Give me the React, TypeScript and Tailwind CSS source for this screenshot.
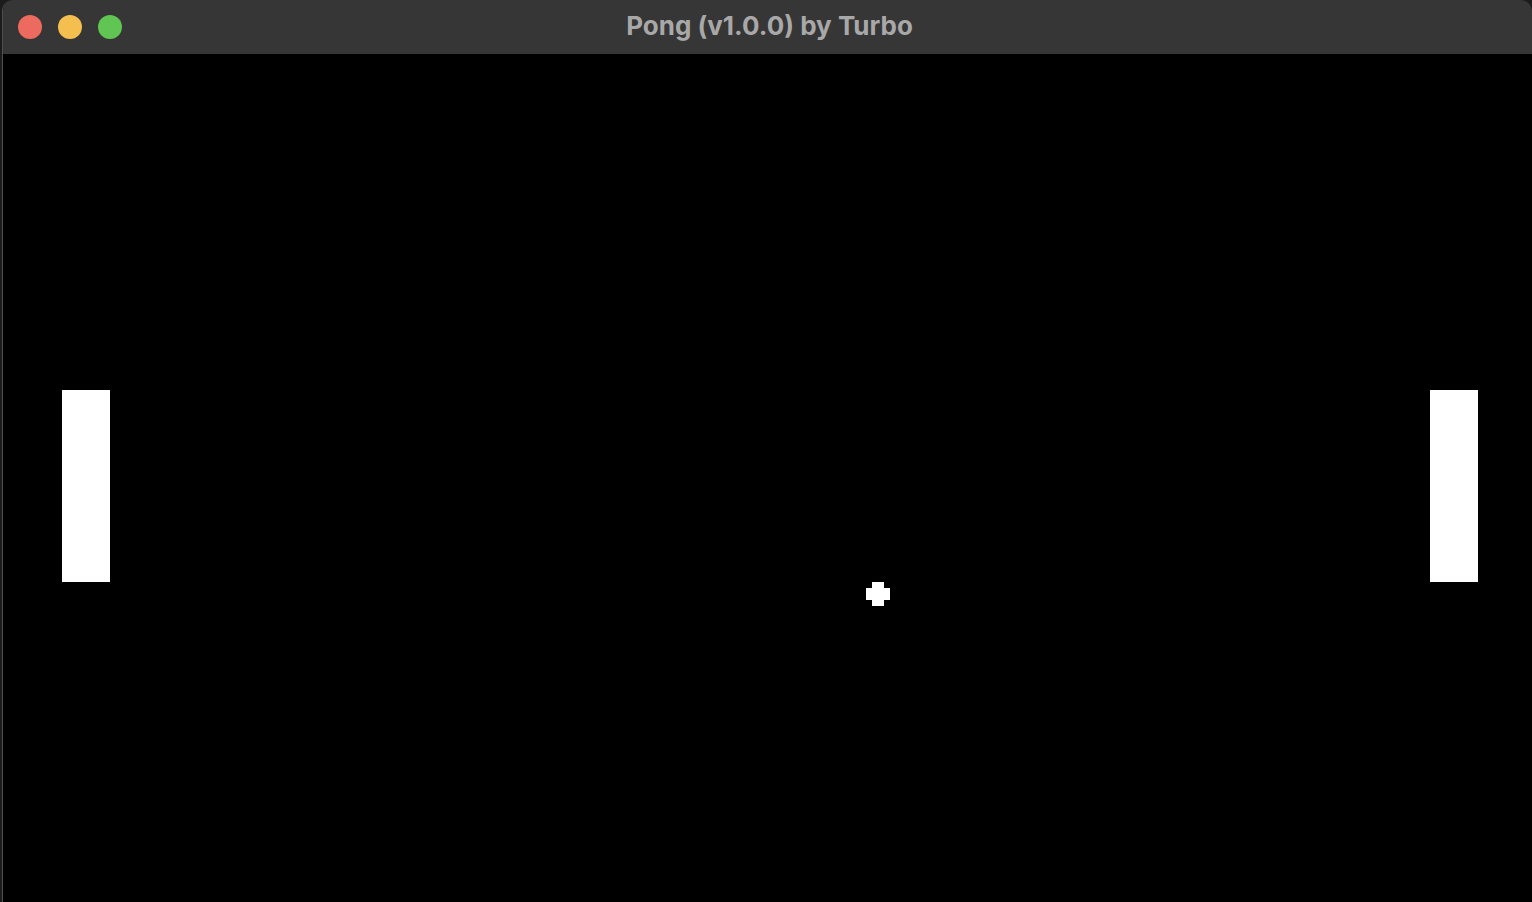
export default function App() {
  return (
    <div className="flex h-[902px] w-[1532px] overflow-hidden bg-[#1c1c1c] pl-[2px]">
      <div className="flex flex-1 flex-col overflow-hidden rounded-t-[11px] border-l border-[#4e4e4e] bg-black">
        <div className="relative flex h-[54px] shrink-0 items-center bg-[#363636]">
          <div className="flex items-center gap-[16px] pl-[15px]">
            <span className="h-[24px] w-[24px] rounded-full bg-[#ed6a5e]" />
            <span className="h-[24px] w-[24px] rounded-full bg-[#f5bf4f]" />
            <span className="h-[24px] w-[24px] rounded-full bg-[#61c554]" />
          </div>
          <div className="absolute inset-0 flex items-center justify-center pb-[4px] pl-[4px] font-['Inter',sans-serif] text-[26px] font-bold text-[#a8a8a8]">
            Pong (v1.0.0) by Turbo
          </div>
        </div>
        <div className="relative flex-1 bg-black">
          <div className="absolute left-[59px] top-[336px] h-[192px] w-[48px] bg-white" />
          <div className="absolute left-[1427px] top-[336px] h-[192px] w-[48px] bg-white" />
          <div className="absolute left-[863px] top-[528px] h-[24px] w-[24px]">
            <div className="absolute left-0 top-[6px] h-[12px] w-[24px] bg-white" />
            <div className="absolute left-[6px] top-0 h-[24px] w-[12px] bg-white" />
          </div>
        </div>
      </div>
    </div>
  )
}
